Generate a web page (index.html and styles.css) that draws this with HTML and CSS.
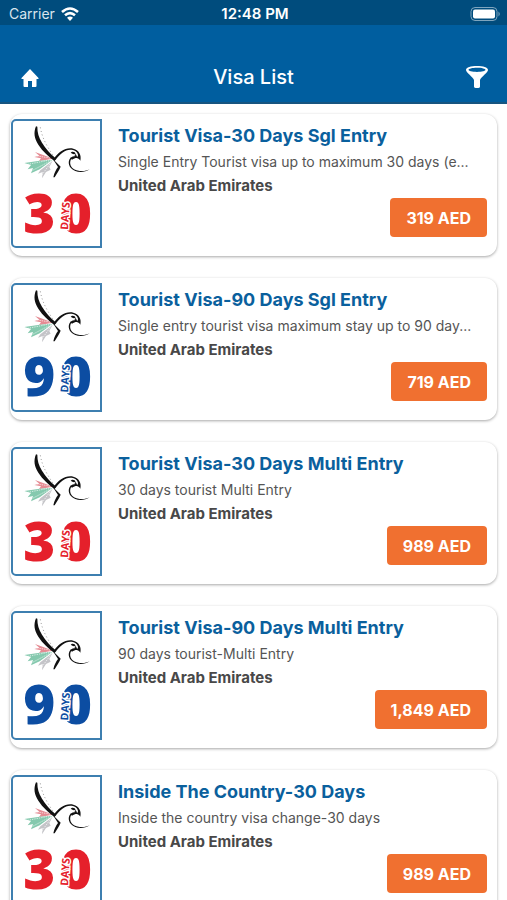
FILE: index.html
```html
<!DOCTYPE html>
<html lang="en">

<head>
    <meta charset="UTF-8">
    <meta name="viewport" content="width=device-width, initial-scale=1.0">
    <title>Visa List</title>
    <link rel="stylesheet" href="styles.css">
</head>

<body>

    <!-- shared falcon drawing -->
    <svg class="defs" aria-hidden="true">
        <symbol id="falcon" viewBox="0 0 261 180">
            <!-- tail feathers -->
            <path fill="#e58b93" d="M121 113 L66 93 L79 104 L64 108 L84 112 L78 120 Z" />
            <path fill="#85c9ae" d="M119 116 L80 119 L34 126 L54 132 L44 145 L60 141 L54 157 L80 145 Z" />
            <path fill="#c4c4c8" d="M119 119 L82 148 L75 158 L89 153 L87 172 L99 153 L113 146 L109 138 Z" />
            <path stroke="#fff" stroke-width="2" stroke-dasharray="4 3" fill="none" d="M116 116 L44 130 M114 119 L57 149 M114 124 L86 163 M111 111 L73 105" />
            <!-- wing -->
            <path d="M69 16 C61 35 64 52 76 71 C89 91 105 105 125 121 L128 112 C111 98 98 82 87 65 C77 49 73 34 73 17 Z" />
            <path fill="none" stroke="#999" stroke-width="3" stroke-dasharray="3 8" d="M82 19 C87 48 99 72 119 101" />
            <!-- leg, neck and beak -->
            <path d="M119 113 L143 137 C138 149 132 156 125 169 L121 169 C124 155 129 146 135 138 Z" />
            <path d="M122 115 C136 91 160 78 181 83 C199 88 206 103 202 119 C196 109 189 108 177 116 L171 111 C179 105 189 103 195 107 C196 97 191 90 180 87 C160 82 143 95 127 118 Z" />
            <path d="M177 92 Q186 91 188 98 Q181 102 173 95 Z M188 99 L193 108 L184 103 Z" />
            <path d="M176 112 C166 126 172 147 200 150 C213 151 222 149 230 145 C217 154 199 155 187 150 C166 142 163 122 172 111 Z" />
        </symbol>
    </svg>

    <div class="app">
        <div class="status-bar">
            <span class="carrier">Carrier
                <svg width="18" height="14" viewBox="0 0 18 14" fill="none" stroke="#fff" stroke-width="2.6">
                    <path d="M1 5 Q9 -2 17 5" />
                    <path d="M4 8.3 Q9 4 14 8.3" />
                    <path fill="#fff" stroke="none" d="M6 10.7 Q9 8.3 12 10.7 L9 14 Z" />
                </svg>
            </span>
            <span class="time">12:48 PM</span>
            <span class="battery">
                <svg width="31" height="14" viewBox="0 0 31 14">
                    <rect x="1" y="0.5" width="26" height="13" rx="4" fill="none" stroke="#7fa5be" />
                    <rect x="3" y="2.5" width="22" height="9" rx="2" fill="#fff" />
                    <path fill="#7fa5be" d="M28.5 4.5 Q31 7 28.5 9.5 Z" />
                </svg>
            </span>
        </div>

        <header class="nav-bar">
            <button class="icon-button" type="button" aria-label="Home">
                <svg width="22" height="22" viewBox="0 0 22 22" fill="#fff">
                    <path d="M11 3 L19.500 12 Q20 13 19 13 L17.500 13 L17.500 20 Q17.500 21 16.500 21 L13 21 L13 15 L9 15 L9 21 L5.500 21 Q4.500 21 4.500 20 L4.500 13 L3 13 Q2 13 2.500 12 Z" />
                </svg>
            </button>
            <h1>Visa List</h1>
            <button class="icon-button" type="button" aria-label="Filter">
                <svg width="22" height="22" viewBox="0 0 22 22" fill="#fff">
                    <path fill-rule="evenodd" d="M11 0 C17 0 22 1.400 22 4 C22 6.500 15 11 14 14 L14 20.500 Q14 22 11 22 Q8 22 8 20.500 L8 14 C7 11 0 6.500 0 4 C0 1.400 5 0 11 0 Z M11 1.700 C6 1.700 2.500 2.700 2.500 3.800 C2.500 5 6 5.900 11 5.900 C16 5.900 19.500 5 19.500 3.800 C19.500 2.700 16 1.700 11 1.700 Z" />
                </svg>
            </button>
        </header>

        <main class="visa-list">
            <article class="card">
                <svg class="thumb red" viewBox="0 0 261 375" role="img" aria-label="30 days">
                    <use href="#falcon" width="261" height="180" />
                    <text class="digits" x="31 141" y="337">30</text>
                    <text class="days" transform="translate(165 327) rotate(-86)">DAYS</text>
                </svg>
                <div class="info">
                    <h2>Tourist Visa-30 Days Sgl Entry</h2>
                    <p class="description">Single Entry Tourist visa up to maximum 30 days (e...</p>
                    <p class="country">United Arab Emirates</p>
                    <button class="price" type="button">319 AED</button>
                </div>
            </article>

            <article class="card">
                <svg class="thumb blue" viewBox="0 0 261 375" role="img" aria-label="90 days">
                    <use href="#falcon" width="261" height="180" />
                    <text class="digits" x="31 141" y="333">90</text>
                    <text class="days" transform="translate(165 323) rotate(-86)">DAYS</text>
                </svg>
                <div class="info">
                    <h2>Tourist Visa-90 Days Sgl Entry</h2>
                    <p class="description">Single entry tourist visa maximum stay up to 90 day...</p>
                    <p class="country">United Arab Emirates</p>
                    <button class="price" type="button">719 AED</button>
                </div>
            </article>

            <article class="card">
                <svg class="thumb red" viewBox="0 0 261 375" role="img" aria-label="30 days">
                    <use href="#falcon" width="261" height="180" />
                    <text class="digits" x="31 141" y="337">30</text>
                    <text class="days" transform="translate(165 327) rotate(-86)">DAYS</text>
                </svg>
                <div class="info">
                    <h2>Tourist Visa-30 Days Multi Entry</h2>
                    <p class="description">30 days tourist Multi Entry</p>
                    <p class="country">United Arab Emirates</p>
                    <button class="price" type="button">989 AED</button>
                </div>
            </article>

            <article class="card">
                <svg class="thumb blue" viewBox="0 0 261 375" role="img" aria-label="90 days">
                    <use href="#falcon" width="261" height="180" />
                    <text class="digits" x="31 141" y="333">90</text>
                    <text class="days" transform="translate(165 323) rotate(-86)">DAYS</text>
                </svg>
                <div class="info">
                    <h2>Tourist Visa-90 Days Multi Entry</h2>
                    <p class="description">90 days tourist-Multi Entry</p>
                    <p class="country">United Arab Emirates</p>
                    <button class="price" type="button">1,849 AED</button>
                </div>
            </article>

            <article class="card">
                <svg class="thumb red" viewBox="0 0 261 375" role="img" aria-label="30 days">
                    <use href="#falcon" width="261" height="180" />
                    <text class="digits" x="31 141" y="337">30</text>
                    <text class="days" transform="translate(165 327) rotate(-86)">DAYS</text>
                </svg>
                <div class="info">
                    <h2>Inside The Country-30 Days</h2>
                    <p class="description">Inside the country visa change-30 days</p>
                    <p class="country">United Arab Emirates</p>
                    <button class="price" type="button">989 AED</button>
                </div>
            </article>
        </main>
    </div>

</body>

</html>
```

FILE: styles.css
```css
* {
    box-sizing: border-box;
}

body {
    margin: 0;
    background-color: #fff;
    font-family: Inter, "Liberation Sans", sans-serif;
}

h1, h2, p {
    margin: 0;
}

button {
    border: 0;
    font-family: inherit;
    cursor: pointer;
}

.defs {
    display: none;
}

.app {
    display: flex;
    flex-direction: column;
    height: 100vh;
}

/* top bars */
.status-bar {
    display: grid;
    grid-template-columns: 1fr auto 1fr;
    align-items: center;
    flex: none;
    height: 25px;
    padding: 2px 6px 0 9px;
    background-color: #004c7d;
    color: #fff;
    font-size: 15px;
}

.carrier {
    display: flex;
    align-items: center;
    gap: 6px;
    color: #d9e5ed;
    font-size: 14px;
}

.time {
    font-weight: 600;
}

.battery {
    display: flex;
    justify-content: flex-end;
}

.nav-bar {
    display: flex;
    align-items: center;
    justify-content: space-between;
    flex: none;
    height: 79px;
    padding: 26px 19px 0;
    background-color: #005e9f;
    border-bottom: 2px solid #175580;
    color: #fff;
}

.nav-bar h1 {
    font-size: 20px;
    font-weight: 500;
}

.icon-button {
    display: flex;
    padding: 0;
    background: none;
}

/* list */
.visa-list {
    display: flex;
    flex-direction: column;
    gap: 22px;
    flex: 1;
    min-height: 0;
    padding: 10px;
    overflow-y: auto;
    scrollbar-width: none;
}

.card {
    display: flex;
    flex: none;
    gap: 16px;
    height: 142px;
    padding: 5px 10px 8px 1px;
    background-color: #fff;
    border-radius: 12px;
    box-shadow: 0 1px 3px rgba(0, 0, 0, 0.35);
}

.thumb {
    flex: none;
    width: 91px;
    height: 129px;
    border: 2px solid #3d7fb0;
    border-radius: 5px 0 0 5px;
}

.digits {
    font-family: "Open Sans", sans-serif;
    font-size: 164px;
    font-weight: 800;
}

.days {
    font-family: "Open Sans", sans-serif;
    font-size: 32px;
    font-weight: 700;
    stroke: #fff;
    stroke-width: 8px;
    paint-order: stroke;
}

.red {
    fill: #e5202b;
}

.blue {
    fill: #0c4da2;
}

.thumb use {
    fill: #111;
}

.info {
    display: flex;
    flex-direction: column;
    flex: 1;
    min-width: 0;
    padding-top: 3px;
}

.info h2 {
    color: #0a609d;
    font-size: 18px;
    font-weight: 700;
    line-height: 28px;
}

.info p {
    line-height: 24px;
    white-space: nowrap;
    overflow: hidden;
    text-overflow: ellipsis;
}

.description {
    color: #555;
    font-size: 14px;
}

.country {
    color: #484848;
    font-size: 15px;
    font-weight: 700;
}

.price {
    align-self: flex-end;
    height: 39px;
    padding: 0 16px;
    background-color: #f07030;
    border-radius: 4px;
    color: #fff;
    font-size: 16px;
    font-weight: 700;
}
```
